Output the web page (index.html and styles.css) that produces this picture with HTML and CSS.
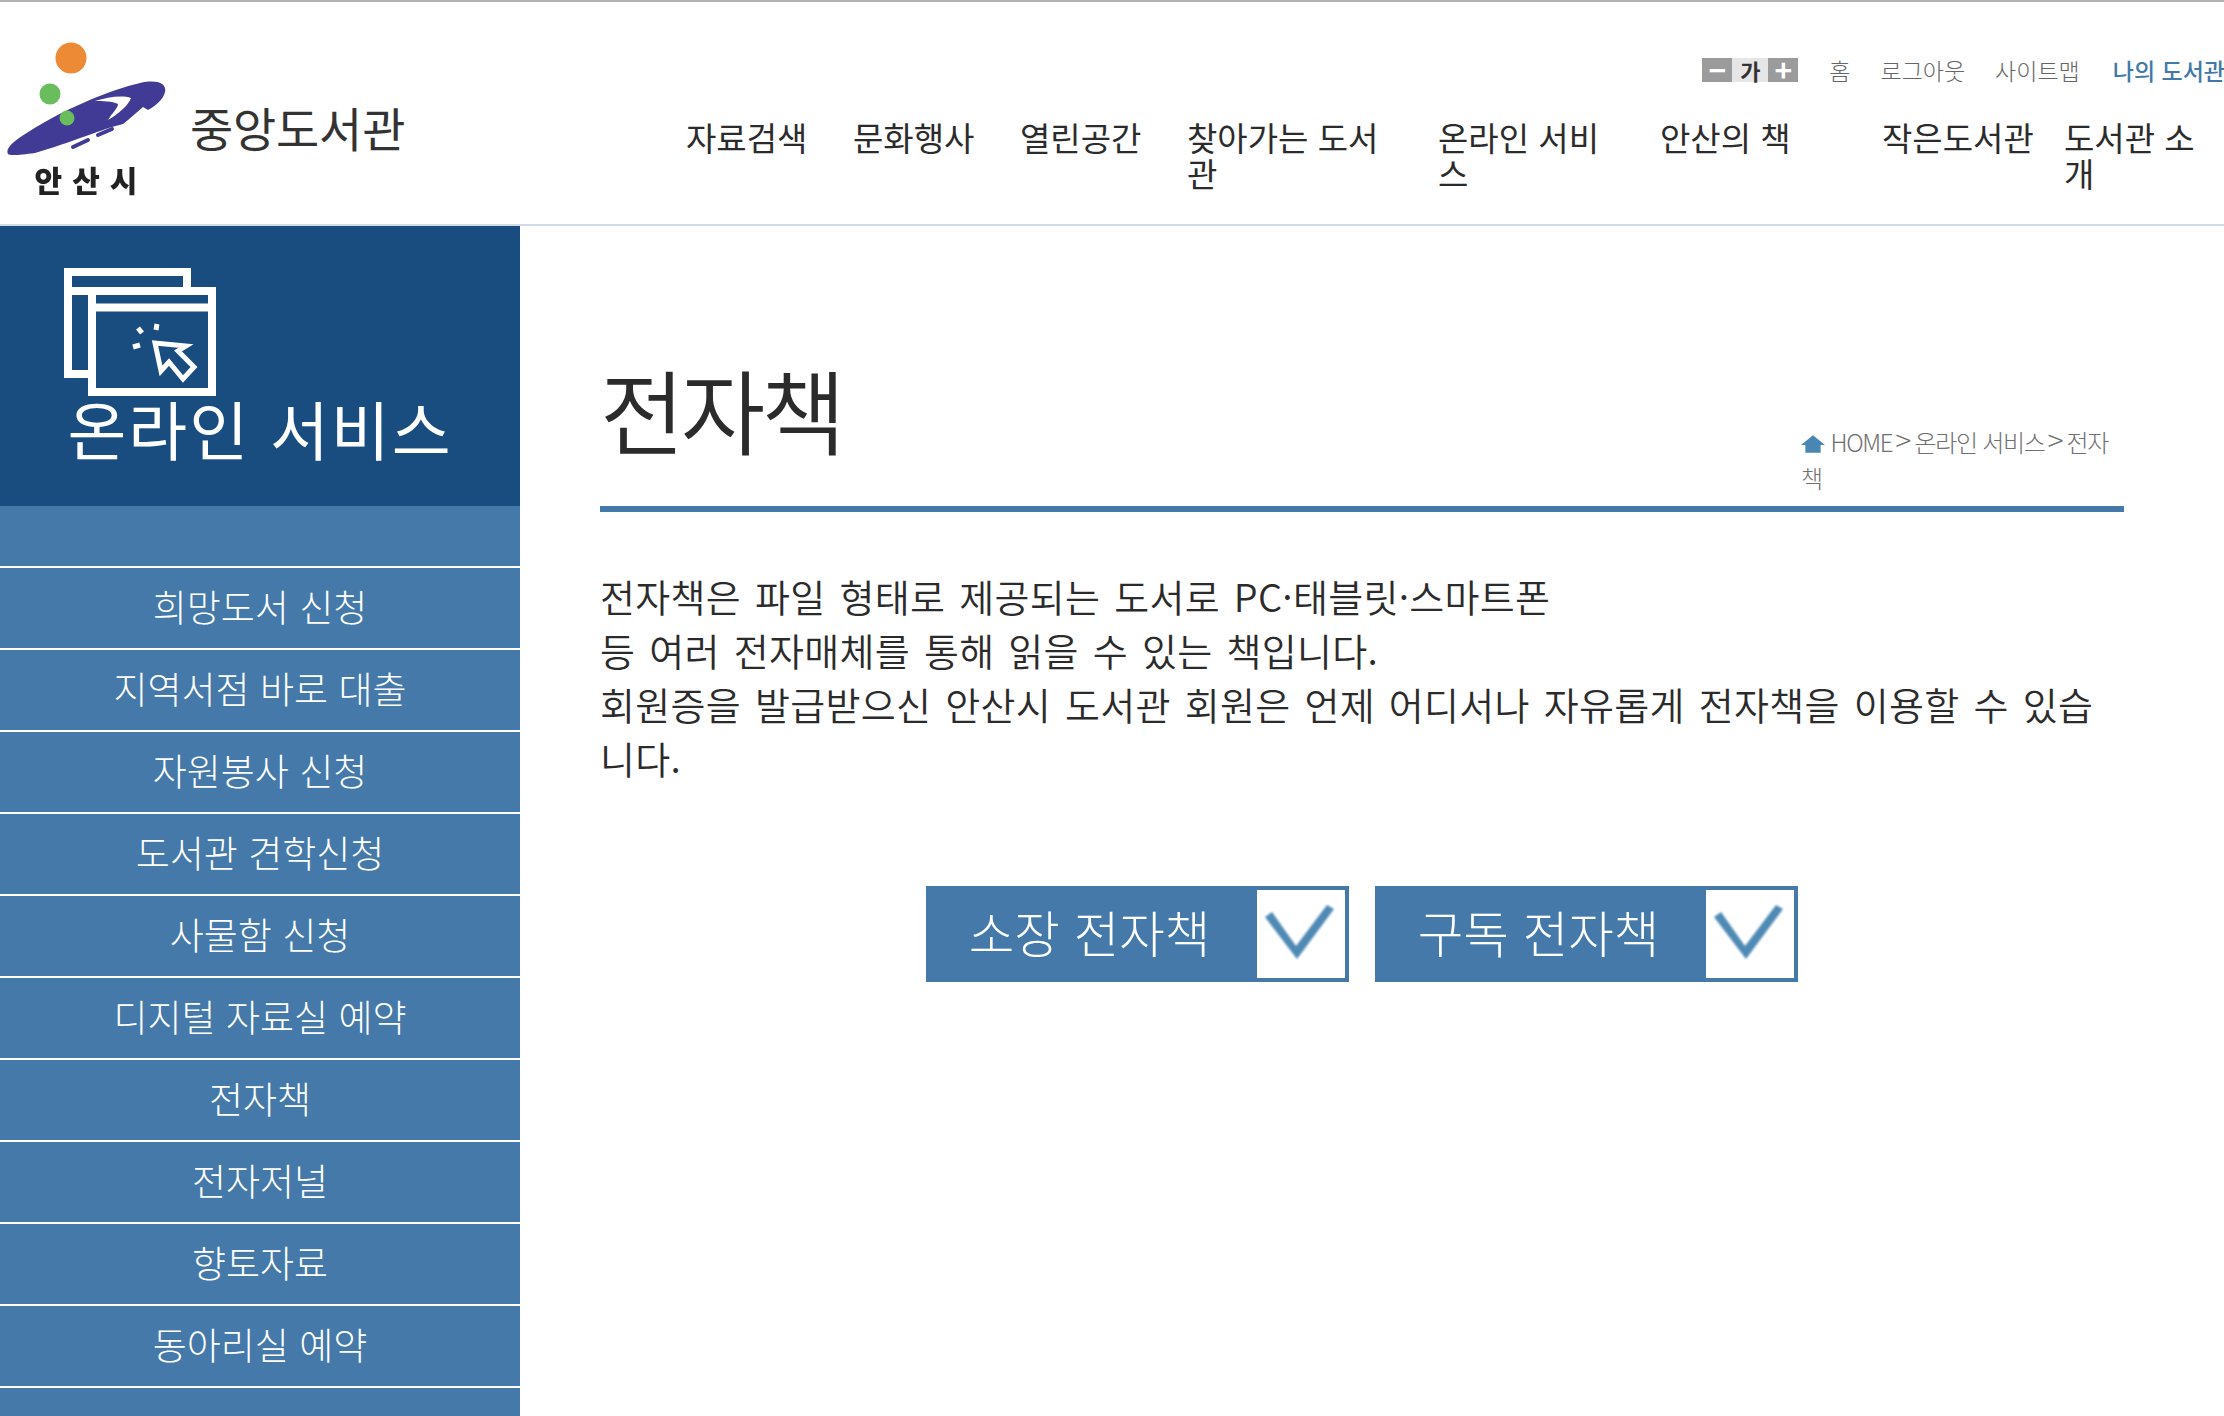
FILE: index.html
```html
<!DOCTYPE html>
<html lang="ko">
<head>
<meta charset="utf-8">
<title>전자책</title>
<link rel="stylesheet" href="styles.css">
</head>
<body>
<header class="header">
  <div class="brand">
    <svg class="logo" viewBox="0 0 170 200" width="170" height="200">
      <circle cx="71" cy="56" r="15.5" fill="#ec8a36"/>
      <circle cx="50" cy="92" r="10.5" fill="#69bd5c"/>
      <path d="M8 152C5 146 14 138 38 124C70 105 110 88 140 81C158 77 167 82 165 90C163 98 155 104 148 108L143 105L128 118L123 122C105 126 70 141 35 151C20 153 10 154 8 152Z" fill="#413b95"/>
      <path d="M95 99C108 95 122 93 131 96C128 104 118 112 108 118C112 111 118 106 118 102C112 99 103 99 95 99Z" fill="#fff"/>
      <circle cx="67" cy="116" r="7.5" fill="#69bd5c"/>
      <path d="M73 145L88 138M98 133L112 127" stroke="#413b95" stroke-width="4" stroke-linecap="round"/>
      <text x="91" y="190" class="logo-text" text-anchor="middle">안산시</text>
    </svg>
    <span class="brand-name">중앙도서관</span>
  </div>
  <div class="header-right">
    <div class="util">
      <div class="zoom-ctl"><span class="zoom-btn">−</span><span class="zoom-mid">가</span><span class="zoom-btn">+</span></div>
      <a class="util-link">홈</a>
      <a class="util-link">로그아웃</a>
      <a class="util-link">사이트맵</a>
      <a class="util-link util-strong">나의 도서관</a>
    </div>
    <nav class="gnb">
      <a class="gnb-item w1">자료검색</a>
      <a class="gnb-item w1">문화행사</a>
      <a class="gnb-item w1">열린공간</a>
      <a class="gnb-item w2">찾아가는 도서관</a>
      <a class="gnb-item w3">온라인 서비스</a>
      <a class="gnb-item w3">안산의 책</a>
      <a class="gnb-item w4">작은도서관</a>
      <a class="gnb-item w5">도서관 소개</a>
    </nav>
  </div>
</header>
<div class="page">
  <aside class="side">
    <div class="side-head">
      <svg class="side-icon" viewBox="0 0 152 128" width="152" height="128" fill="none" stroke="#fff" stroke-width="8">
        <path d="M28 106H4V4H123V23"/>
        <path d="M4 23H28"/>
        <rect x="28" y="23" width="120" height="101"/>
        <path d="M28 39.5H148"/>
        <path d="M91 75L97 103L105 94L119 111L130 99L114 83L122 78Z" stroke-width="5"/>
        <path d="M78 65L74 60M92 62L93 56M76 77L69 79" stroke-width="5"/>
      </svg>
      <h2 class="side-title">온라인 서비스</h2>
    </div>
    <ul class="side-menu">
      <li>희망도서 신청</li>
      <li>지역서점 바로 대출</li>
      <li>자원봉사 신청</li>
      <li>도서관 견학신청</li>
      <li>사물함 신청</li>
      <li>디지털 자료실 예약</li>
      <li>전자책</li>
      <li>전자저널</li>
      <li>향토자료</li>
      <li>동아리실 예약</li>
    </ul>
  </aside>
  <main class="content">
    <div class="title-row">
      <h1 class="page-title">전자책</h1>
      <div class="crumbs"><svg class="home" viewBox="0 0 22 16" width="24" height="18"><path d="M11 0L22 9H18V16H4V9H0Z" fill="#4a86b4"/></svg> HOME<span class="sep">&gt;</span>온라인 서비스<span class="sep">&gt;</span>전자<br>책</div>
    </div>
    <p class="intro">전자책은 파일 형태로 제공되는 도서로 PC·태블릿·스마트폰<br>등 여러 전자매체를 통해 읽을 수 있는 책입니다.<br>회원증을 발급받으신 안산시 도서관 회원은 언제 어디서나 자유롭게 전자책을 이용할 수 있습니다.</p>
    <div class="buttons">
      <a class="ebtn"><span class="ebtn-label">소장 전자책</span><span class="ebtn-check"><svg class="check" viewBox="0 0 88 88" width="88" height="88"><path d="M8 27L15 22L39 56L70 15L77 19L40 69Z" fill="#4f8ab5"/></svg></span></a>
      <a class="ebtn"><span class="ebtn-label">구독 전자책</span><span class="ebtn-check"><svg class="check" viewBox="0 0 88 88" width="88" height="88"><path d="M8 27L15 22L39 56L70 15L77 19L40 69Z" fill="#4f8ab5"/></svg></span></a>
    </div>
  </main>
</div>
</body>
</html>
```

FILE: styles.css
```css
* { box-sizing: border-box; }
html, body { margin: 0; padding: 0; height: 1416px; overflow: hidden; background: #fff; }
body { font-family: "Noto Sans CJK KR", "Noto Sans", sans-serif; color: #2b2b2b; }
a { color: inherit; text-decoration: none; }
ul { list-style: none; margin: 0; padding: 0; }
h1, h2, p { margin: 0; font-weight: 300; }

.header { display: flex; height: 226px; border-top: 2px solid #b4b4b4; border-bottom: 2px solid #d2dce6; }
.brand { width: 640px; flex: none; display: flex; align-items: flex-start; }
.logo { flex: none; filter: blur(.5px); }
.logo-text { font-size: 30px; font-weight: 900; fill: #222; letter-spacing: 10px; }
.brand-name { margin-left: 20px; margin-top: 92px; font-size: 47px; line-height: 66px; font-weight: 400; color: #333; letter-spacing: -.2px; }
.header-right { flex: 1; min-width: 0; padding-top: 51px; overflow: hidden; }
.util { display: flex; justify-content: flex-end; align-items: center; height: 34px; white-space: nowrap; font-size: 23px; color: #666; font-weight: 300; }
.zoom-ctl { display: flex; width: 96px; height: 24px; margin-right: 31px; flex: none; }
.zoom-btn { width: 30px; background: #9b9b9b; color: #fff; font-size: 30px; font-weight: 700; line-height: 22px; text-align: center; }
.zoom-mid { width: 36px; background: #e6e6e6; color: #333; font-size: 22px; font-weight: 700; line-height: 24px; text-align: center; }
.util-link { margin-right: 30px; flex: none; }
.util-strong { color: #4279a8; font-weight: 500; margin-left: 3px; margin-right: -1px; }
.gnb { display: flex; margin-left: 46px; margin-top: 32px; font-size: 33px; line-height: 36px; font-weight: 400; }
.gnb-item { display: block; flex: none; }
.w1 { width: 167px; }
.w2 { width: 251px; padding-right: 40px; }
.w3 { width: 222px; padding-right: 40px; }
.w4 { width: 182px; }
.w5 { width: 140px; }

.page { display: flex; height: 1190px; }
.side { width: 520px; flex: none; background: #4479a9; }
.side-head { height: 280px; background: #194d7f; padding: 42px 0 0 64px; position: relative; }
.side-icon { display: block; }
.side-title { position: absolute; left: 0; right: 0; top: 156px; text-align: center; color: #fff; font-size: 64px; line-height: 90px; font-weight: 400; letter-spacing: 2px; }
.side-menu { padding-top: 60px; }
.side-menu li { height: 82px; border-top: 2px solid #fff; color: #fff; text-align: center; font-size: 37px; line-height: 76px; font-weight: 300; }
.side-menu li:last-child { height: 84px; border-bottom: 2px solid #fff; }

.content { flex: 1; min-width: 0; padding: 0 100px 0 80px; }
.title-row { display: flex; justify-content: space-between; height: 286px; padding-top: 127px; border-bottom: 6px solid #4479a9; }
.page-title { color: #2b2b2b; font-size: 92px; line-height: 110px; font-weight: 350; letter-spacing: -4px; }
.crumbs { flex: none; width: 306px; margin-right: 17px; margin-top: 71px; white-space: nowrap; font-size: 24px; line-height: 36px; color: #707070; font-weight: 300; letter-spacing: -1.3px; }
.sep { font-size: 30px; line-height: 30px; font-weight: 200; margin: 0 3px; letter-spacing: 0; }
.home { vertical-align: -1px; }
.intro { margin-top: 57px; font-size: 38px; line-height: 54px; color: #2b2b2b; font-weight: 350; letter-spacing: .3px; word-spacing: 3px; }
.buttons { display: flex; justify-content: center; gap: 26px; margin-top: 101px; }
.ebtn { display: flex; width: 423px; height: 96px; background: #4479a9; padding: 4px; align-items: stretch; }
.ebtn-label { flex: 1; color: #fff; font-size: 49.5px; line-height: 84px; text-align: center; font-weight: 300; padding-right: 8px; }
.ebtn-check { width: 88px; flex: none; background: #fff; display: flex; align-items: center; justify-content: center; }
.check { filter: blur(.8px); }
```
